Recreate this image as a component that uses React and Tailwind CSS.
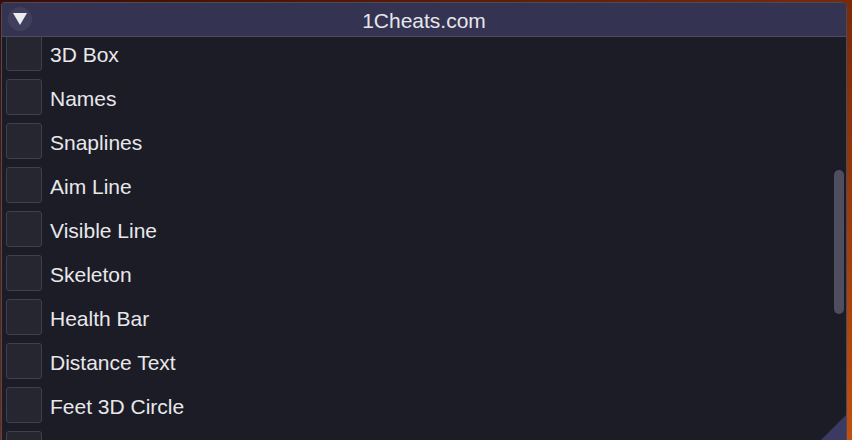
import React from 'react';

const items = [
  '3D Box',
  'Names',
  'Snaplines',
  'Aim Line',
  'Visible Line',
  'Skeleton',
  'Health Bar',
  'Distance Text',
  'Feet 3D Circle',
  '',
];

const Checkbox = ({ label }) => (
  <div className="flex items-center h-[36px] mb-[8px]">
    <div className="w-[36px] h-[36px] rounded-[3px] bg-[#262631] border border-[#40404c] shrink-0" />
    {label && (
      <span className="ml-[8px] text-[21px] text-[#e8e8ea] leading-none pt-[2px]">{label}</span>
    )}
  </div>
);

const App = () => {
  return (
    <div
      className="w-[852px] h-[440px] overflow-hidden bg-gradient-to-br from-[#3a0c06] via-[#7a2a0a] to-[#c0500f] pt-[2px] pl-[1px]"
      style={{ fontFamily: '"Liberation Sans", Arial, sans-serif' }}
    >
      <div className="w-[846px] h-[460px] bg-[#1c1c27] border border-[#4a4a58] rounded-tr-[5px] rounded-tl-[3px] flex flex-col overflow-hidden relative">
        {/* Title bar */}
        <div className="h-[34px] bg-[#343452] border-b border-[#4c4c5a] flex items-center relative shrink-0">
          <div className="absolute left-[6px] top-[4px] w-[24px] h-[24px] rounded-full bg-[#40405c] flex items-center justify-center">
            <svg width="16" height="14" viewBox="0 0 16 14">
              <polygon points="1,1 15,1 8,13" fill="#ececf0" />
            </svg>
          </div>
          <div className="flex-1 text-center text-[21px] text-[#e6e6ea] pt-[2px]">1Cheats.com</div>
        </div>

        {/* Body */}
        <div className="flex-1 flex overflow-hidden">
          <div className="flex-1 pl-[4px] mt-[-2px]">
            {items.map((label, i) => (
              <Checkbox key={i} label={label} />
            ))}
          </div>
          <div className="w-[12px] pt-[133px] pr-[2px]">
            <div className="w-[10px] h-[144px] rounded-full bg-[#4e4e5e]" />
          </div>
        </div>

        {/* Resize grip */}
        <svg className="absolute left-[818px] top-[410px]" width="28" height="28" viewBox="0 0 28 28">
          <polygon points="28,0 28,28 0,28" fill="#3a3a62" />
        </svg>
      </div>
    </div>
  );
};

export default App;
